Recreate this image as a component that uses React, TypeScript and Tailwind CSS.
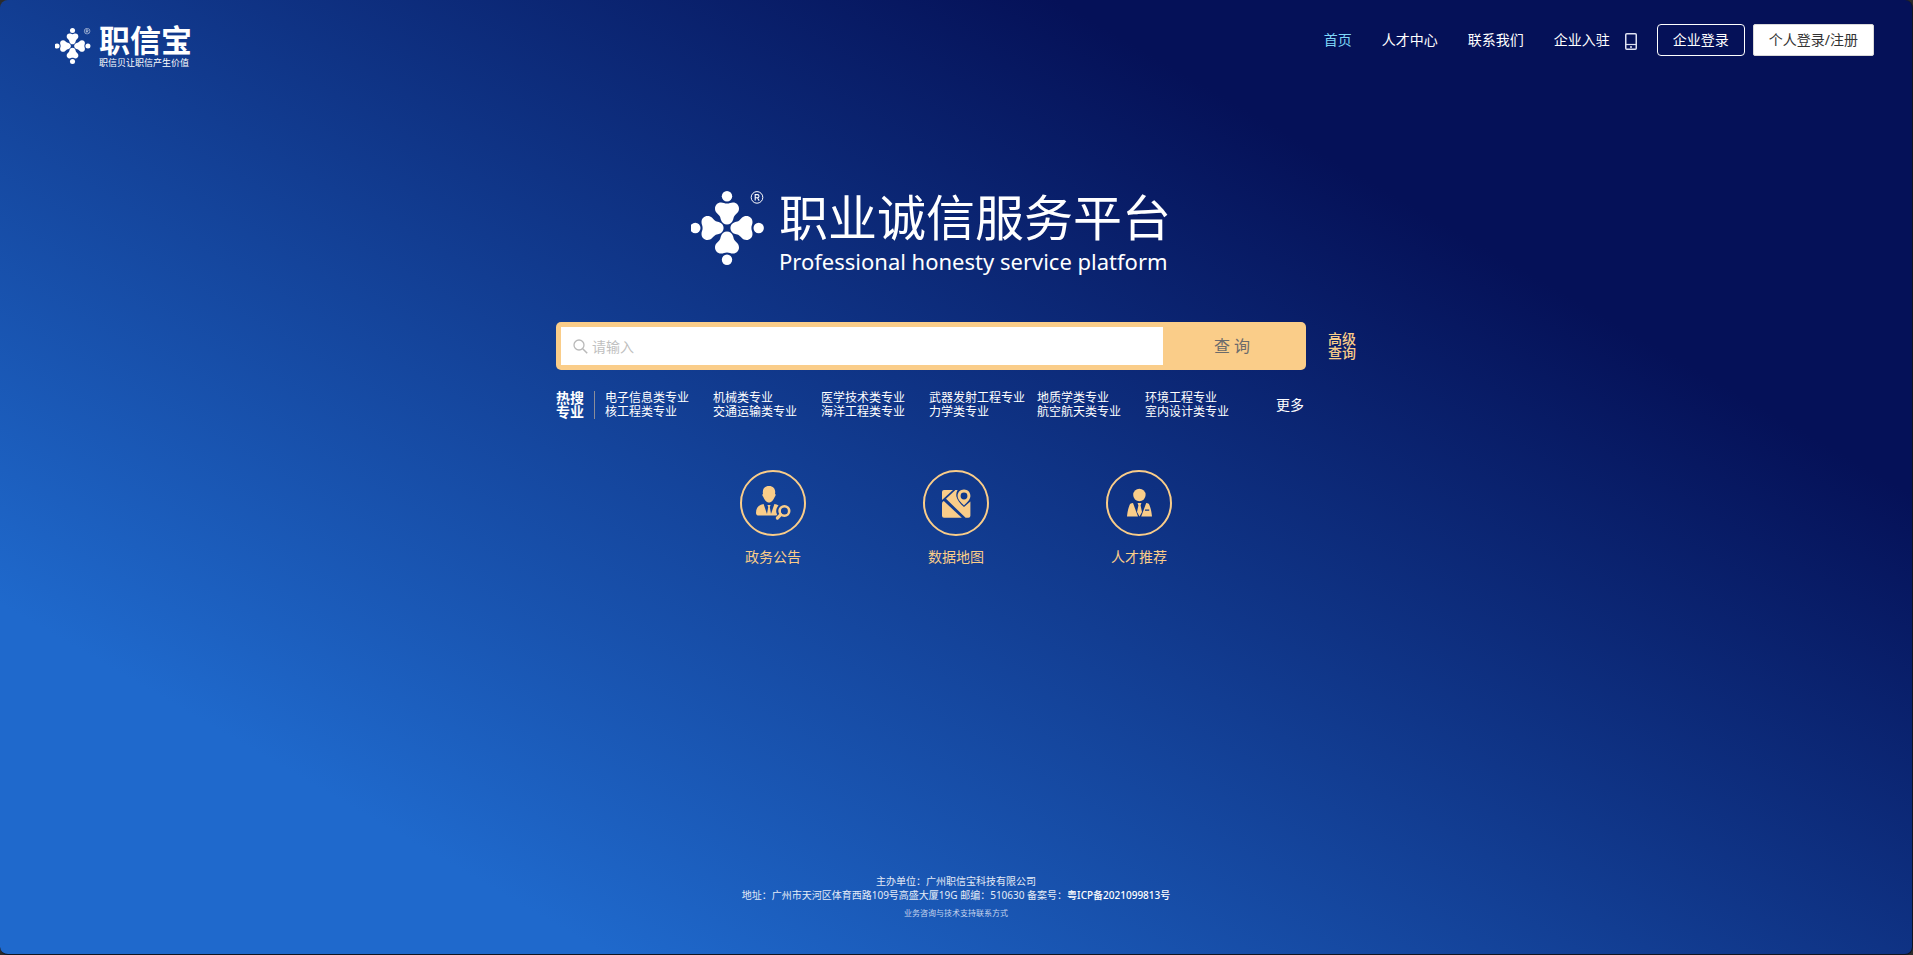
import clsx from "clsx";
import type { FC, ReactNode } from "react";

const navLinks = [
  { label: "首页", active: true },
  { label: "人才中心", active: false },
  { label: "联系我们", active: false },
  { label: "企业入驻", active: false },
];

const hotMajors = [
  ["电子信息类专业", "核工程类专业"],
  ["机械类专业", "交通运输类专业"],
  ["医学技术类专业", "海洋工程类专业"],
  ["武器发射工程专业", "力学类专业"],
  ["地质学类专业", "航空航天类专业"],
  ["环境工程专业", "室内设计类专业"],
];

interface MarkProps {
  className?: string;
}

const PETAL =
  "M30 11.5 C32.5 11.5 33.5 12.6 36 12.6 C38.5 12.6 39.5 11.5 42 11.5 C45.5 11.5 48 14.2 48 17.5 C48 21.6 45.2 22.6 43.6 24.8 C42.5 26.3 42.6 27.3 42.1 28.8 C41.2 31.8 38.8 33.6 36 33.6 C33.2 33.6 30.8 31.8 29.9 28.8 C29.4 27.3 29.5 26.3 28.4 24.8 C26.8 22.6 24 21.6 24 17.5 C24 14.2 26.5 11.5 30 11.5 Z";

const CloverMark: FC<MarkProps> = ({ className }) => (
  <svg viewBox="0 0 74 75" className={className} fill="white" aria-hidden="true">
    {[0, 90, 180, 270].map((angle) => (
      <g key={angle} transform={`rotate(${angle} 36 37)`}>
        <path d={PETAL} />
        <circle cx="36" cy="5.3" r="5.2" />
      </g>
    ))}
    <g fill="none" stroke="white">
      <circle cx="66" cy="6.4" r="5.8" strokeWidth="1" />
      <path d="M64.2 9.6 V3.6 H66.4 A1.6 1.6 0 0 1 66.4 6.8 H64.2 M66.4 6.8 L68.2 9.6" strokeWidth="1.1" />
    </g>
  </svg>
);

const PhoneIcon: FC = () => (
  <svg viewBox="0 0 12 17" className="h-[17px] w-3" fill="none" stroke="#dfe2f2" aria-hidden="true">
    <rect x="0.75" y="0.75" width="10.5" height="15.5" rx="1" strokeWidth="1.5" />
    <path d="M1 11.5 H11" strokeWidth="1.2" />
    <path d="M5 14 H7" strokeWidth="1.4" />
  </svg>
);

const SearchIcon: FC = () => (
  <svg viewBox="0 0 15 15" className="size-[15px] shrink-0" fill="none" stroke="#b9b9b9" aria-hidden="true">
    <circle cx="6" cy="6" r="5" strokeWidth="1.3" />
    <path d="M9.7 9.7 L14.2 14.2" strokeWidth="1.5" />
  </svg>
);

const NoticeIcon: FC = () => (
  <svg viewBox="2 2 62 62" className="size-full" fill="#facd89" aria-hidden="true">
    <path d="M29 16 C33 16 35.2 18.6 35.2 22 C35.2 22.6 35.1 23.2 35 23.8 C36 24 35.8 26 34.8 26.8 C33.8 29.6 31.6 32.6 29 32.6 C26.4 32.6 24.2 29.6 23.2 26.8 C22.2 26 22 24 23 23.8 C22.9 23.2 22.8 22.6 22.8 22 C22.8 18.6 25 16 29 16 Z" />
    <path d="M23.6 34 L27 44 L28.2 37 L27.4 35 H30.6 L29.8 37 L31 44 L34.4 34 C36 34.3 37.4 34.8 38.6 35.6 C35.8 38.4 35.6 42.2 37.2 44.6 L36.4 45.6 H19 C17 45.6 16 44.6 16 43 C16 37.4 18.6 34.8 23.6 34 Z" />
    <g fill="none" stroke="#facd89">
      <circle cx="44.4" cy="41" r="4.8" strokeWidth="2.6" />
      <path d="M40.8 44.6 L37.4 48" strokeWidth="3.2" strokeLinecap="round" />
    </g>
  </svg>
);

const MapIcon: FC = () => (
  <svg viewBox="2 2 62 62" className="size-full" fill="#facd89" aria-hidden="true">
    <path d="M19 30 V22 Q19 20 21 20 H30 Z" />
    <path d="M19 33.4 Q19 31.6 20.8 31 L38.8 47.8 H21 Q19 47.8 19 45.8 Z" />
    <path d="M23 28.8 L32.4 20 H34.6 C33.4 22 33 24 33.4 26.4 C34.2 29.8 37 33.4 41 37 L47.4 31.4 V45.8 Q47.4 47.8 45.4 47.8 H42.6 Z" />
    <path
      fillRule="evenodd"
      d="M41 19.6 C44.8 19.6 47.4 22.4 47.4 26 C47.4 29.4 44 32.6 41 35.4 C38 32.6 34.6 29.4 34.6 26 C34.6 22.4 37.2 19.6 41 19.6 Z M41 22.6 A3.4 3.4 0 1 0 41 29.4 A3.4 3.4 0 1 0 41 22.6 Z"
    />
  </svg>
);

const TalentIcon: FC = () => (
  <svg viewBox="2 2 62 62" className="size-full" fill="#facd89" aria-hidden="true">
    <circle cx="33.4" cy="25" r="6.2" />
    <path d="M27 33 L32 46.6 H21 C21.4 42 22.2 38.4 23.4 35.4 C24 33.8 25.2 33 27 33 Z" />
    <path d="M31.6 33 H35.4 L34.6 35.4 L36 42 L33.5 46.4 L31 42 L32.4 35.4 Z" />
    <path
      fillRule="evenodd"
      d="M40.2 33 C42 33 43 33.8 43.6 35.4 C44.8 38.4 45.6 42 46 46.6 H35.2 Z M39 39.6 V40.8 H43.2 V39.6 Z"
    />
  </svg>
);

interface EntryProps {
  label: string;
  children: ReactNode;
}

const Entry: FC<EntryProps> = ({ label, children }) => (
  <a href="#" className="flex flex-col items-center gap-3 text-sm leading-[18px] text-[#facd89]">
    <span className="size-[66px] rounded-full border-2 border-[#facd89]">{children}</span>
    {label}
  </a>
);

const Header: FC = () => (
  <header className="flex items-start justify-between pt-6 pr-[38px] pl-[55px]">
    <a href="#" className="flex items-center gap-2 text-white">
      <CloverMark className="w-9" />
      <span className="flex flex-col pt-0.5 font-['Liberation_Sans','Noto_Sans_CJK_SC',sans-serif]">
        <span className="text-[31px] leading-[32px] font-bold">职信宝</span>
        <span className="text-[9px] leading-[10px]">职信贝让职信产生价值</span>
      </span>
    </a>

    <div className="flex items-center text-sm">
      <nav className="flex gap-[30px]">
        {navLinks.map((link) => (
          <a key={link.label} href="#" className={clsx(link.active ? "text-[#7fd6f7]" : "text-white")}>
            {link.label}
          </a>
        ))}
      </nav>
      <a href="#" className="mt-0.5 mr-5 ml-[15px]" aria-label="手机">
        <PhoneIcon />
      </a>
      <button type="button" className="mr-2 h-8 rounded border border-white px-[15px] text-white">
        企业登录
      </button>
      <button type="button" className="h-8 rounded-xs border border-[#d9d9d9] bg-white px-[15px] text-[#333]">
        个人登录/注册
      </button>
    </div>
  </header>
);

const Search: FC = () => (
  <form className="flex items-center gap-[22px]" onSubmit={(e) => e.preventDefault()}>
    <div className="flex h-12 w-[750px] rounded-[5px] bg-[#facd89] p-[5px]">
      <label className="flex flex-1 items-center gap-1 bg-white pl-3">
        <SearchIcon />
        <input
          type="text"
          aria-label="请输入"
          placeholder="请输入"
          className="h-full flex-1 text-sm text-[#333] outline-none placeholder:text-[#bfbfbf]"
        />
      </label>
      <button type="submit" className="w-[138px] text-base text-[#6b6b6b]">
        查 询
      </button>
    </div>
    <a href="#" className="w-7 text-sm leading-[14px] font-medium text-[#facd89]">
      高级查询
    </a>
  </form>
);

const HotMajors: FC = () => (
  <div className="mt-[21px] flex w-[750px] items-center pr-0.5 text-white">
    <h2 className="w-7 text-sm leading-[14px] font-bold">热搜专业</h2>
    <div className="ml-2.5 flex border-l border-[#8b8d99] pl-2.5">
      {hotMajors.map((column) => (
        <ul key={column[0]} className="w-[108px] text-xs leading-[14px] whitespace-nowrap">
          {column.map((major) => (
            <li key={major}>
              <a href="#">{major}</a>
            </li>
          ))}
        </ul>
      ))}
    </div>
    <a href="#" className="ml-auto text-sm leading-[14px]">
      更多
    </a>
  </div>
);

const App: FC = () => {
  return (
    <div className="bg-[#2b2b2b] font-['Noto_Sans','Noto_Sans_CJK_SC',sans-serif]">
      <div className="flex min-h-screen flex-col rounded-lg border-r border-b border-[#101522] bg-[linear-gradient(30deg,#1f69cc_17%,#051158_76%)]">
        <Header />

        <main className="flex flex-1 flex-col items-center pt-[123px]">
          <h1 className="mr-[50px] flex items-start gap-[14px] text-white">
            <CloverMark className="w-[74px]" />
            <span className="flex flex-col">
              <span className="font-['Liberation_Sans','Noto_Sans_CJK_SC',sans-serif] text-[49px] leading-[56px] font-normal">
                职业诚信服务平台
              </span>
              <span className="text-[22px] leading-[28px]">Professional honesty service platform</span>
            </span>
          </h1>

          <div className="mt-[47px]">
            <Search />
            <HotMajors />
          </div>

          <div className="mt-[51px] flex gap-[117px]">
            <Entry label="政务公告">
              <NoticeIcon />
            </Entry>
            <Entry label="数据地图">
              <MapIcon />
            </Entry>
            <Entry label="人才推荐">
              <TalentIcon />
            </Entry>
          </div>
        </main>

        <footer className="pb-[34px] text-center text-[10px] leading-[14px] text-[#e4ebf7]">
          <p>主办单位：广州职信宝科技有限公司</p>
          <p>
            地址：广州市天河区体育西路109号高盛大厦19G 邮编：510630 备案号：
            <a href="#" className="font-medium text-white">
              粤ICP备2021099813号
            </a>
          </p>
          <p className="mt-1 text-[8px] text-[#c5d5ee]">业务咨询与技术支持联系方式</p>
        </footer>
      </div>
    </div>
  );
};

export default App;
